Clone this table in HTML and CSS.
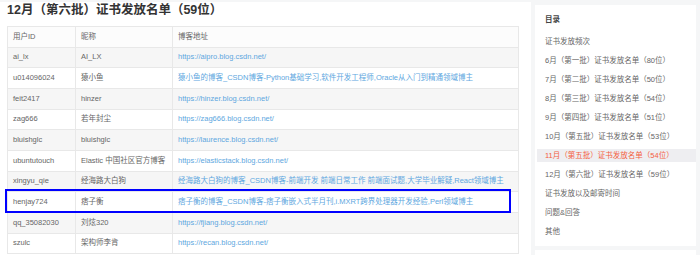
FILE: index.html
```html
<!DOCTYPE html>
<html lang="zh">
<head>
<meta charset="utf-8">
<link rel="stylesheet" href="styles.css">
</head>
<body>
<div class="page">
  <main class="main">
    <h2 class="title">12月（第六批）证书发放名单（59位）</h2>
    <table class="list">
      <colgroup><col class="c1"><col class="c2"><col class="c3"></colgroup>
      <tr class="head"><td>用户ID</td><td>昵称</td><td>博客地址</td></tr>
      <tr><td>ai_lx</td><td>AI_LX</td><td><a>https://aipro.blog.csdn.net/</a></td></tr>
      <tr><td>u014096024</td><td>猿小鱼</td><td><a>猿小鱼的博客_CSDN博客-Python基础学习,软件开发工程师,Oracle从入门到精通领域博主</a></td></tr>
      <tr><td>feit2417</td><td>hinzer</td><td><a>https://hinzer.blog.csdn.net/</a></td></tr>
      <tr><td>zag666</td><td>若年封尘</td><td><a>https://zag666.blog.csdn.net/</a></td></tr>
      <tr><td>bluishglc</td><td>bluishglc</td><td><a>https://laurence.blog.csdn.net/</a></td></tr>
      <tr><td>ubuntutouch</td><td>Elastic 中国社区官方博客</td><td><a>https://elasticstack.blog.csdn.net/</a></td></tr>
      <tr><td>xingyu_qie</td><td>经海路大白狗</td><td><a>经海路大白狗的博客_CSDN博客-前端开发 前端日常工作 前端面试题,大学毕业解疑,React领域博主</a></td></tr>
      <tr><td>henjay724</td><td>痞子衡</td><td><a>痞子衡的博客_CSDN博客-痞子衡嵌入式半月刊,i.MXRT跨界处理器开发经验,Perl领域博主</a></td></tr>
      <tr><td>qq_35082030</td><td>刘炫320</td><td><a>https://fjiang.blog.csdn.net/</a></td></tr>
      <tr><td>szulc</td><td>架构师李肯</td><td><a>https://recan.blog.csdn.net/</a></td></tr>
    </table>
    <div class="mark"></div>
  </main>
  <aside class="side">
    <div class="card toc">
      <div class="toc-title">目录</div>
      <ul class="toc-list">
        <li>证书发放频次</li>
        <li>6月（第一批）证书发放名单（80位）</li>
        <li>7月（第二批）证书发放名单（50位）</li>
        <li>8月（第三批）证书发放名单（54位）</li>
        <li>9月（第四批）证书发放名单（51位）</li>
        <li>10月（第五批）证书发放名单（53位）</li>
        <li class="active">11月（第五批）证书发放名单（54位）</li>
        <li>12月（第六批）证书发放名单（59位）</li>
        <li>证书发放以及邮寄时间</li>
        <li>问题&amp;回答</li>
        <li>其他</li>
      </ul>
    </div>
    <div class="card next"></div>
  </aside>
</div>
</body>
</html>
```
FILE: styles.css
```css
html, body {
  margin: 0;
  padding: 0;
  background: #f5f6f7;
  font-family: "Liberation Sans", "Noto Sans CJK SC", sans-serif;
  color: #666;
  font-size: 7.5px;
}
.page {
  display: flex;
  align-items: flex-start;
  padding-top: 2px;
  height: 253px;
  overflow: hidden;
}
.main {
  position: relative;
  width: 524px;
  padding-left: 7px;
  height: 260px;
  background: #fff;
}
.title {
  margin: 0 0 7px 0;
  font-size: 12.5px;
  line-height: 17px;
  font-weight: bold;
  color: #333;
}
.list {
  border-collapse: collapse;
  table-layout: fixed;
  width: 511px;
}
.c1 { width: 68px; }
.c2 { width: 97px; }
.c3 { width: 346px; }
.list td {
  border: 1px solid #e8e8e8;
  height: 20.67px;
  padding: 0 0 0 5px;
  box-sizing: border-box;
  white-space: nowrap;
  overflow: hidden;
  line-height: 10px;
}
.list tr:nth-child(even) td { background: #f6f6f6; }
.list tr.head td { background: #fcfcfc; }
.list a { color: #5ea7e0; }
.mark {
  position: absolute;
  left: 5px;
  top: 187px;
  width: 502px;
  height: 19.5px;
  border: 2px solid #0000ff;
}
.side {
  margin-left: 4px;
  margin-top: 3px;
  width: 161px;
}
.card {
  background: #fff;
}
.toc {
  padding: 6px 0 8px 0;
}
.toc-title {
  padding-left: 10px;
  line-height: 18px;
  font-weight: bold;
  color: #444;
  margin-bottom: 2px;
}
.toc-list {
  list-style: none;
  margin: 0;
  padding: 0;
}
.toc-list li {
  margin: 6px 0 0 2px;
  padding-left: 8px;
  line-height: 13px;
  color: #666;
  white-space: nowrap;
}
.toc-list li.active {
  background: #eeeef1;
  color: #f4603e;
}
.next {
  margin-top: 4px;
  height: 20px;
}
```
